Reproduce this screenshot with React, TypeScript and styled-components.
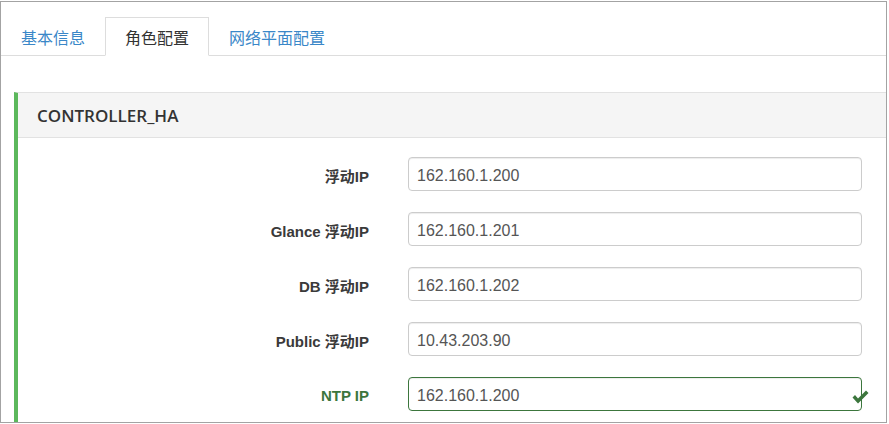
import React from "react";
import styled, { createGlobalStyle } from "styled-components";

const Global = createGlobalStyle`
  html, body { margin: 0; padding: 0; background: #ffffff; }
  body { font-family: "Liberation Sans", Arial, "Noto Sans CJK SC", sans-serif; }
  * { box-sizing: border-box; }
`;

const Frame = styled.div`
  width: 887px;
  height: 422px;
  margin-top: 1px;
  border: 1px solid #a3a3a3;
  overflow: hidden;
  background: #fff;
`;

const TabBar = styled.ul`
  list-style: none;
  margin: 0;
  padding: 15px 0 0 0;
  display: flex;
  border-bottom: 1px solid #dddddd;
`;

const Tab = styled.li<{ $active?: boolean }>`
  padding: 9px 19px 8px;
  line-height: 20px;
  font-size: 16px;
  font-family: "Noto Sans CJK SC", "Liberation Sans", sans-serif;
  margin-bottom: -1px;
  border: 1px solid ${(p) => (p.$active ? "#dddddd" : "transparent")};
  border-bottom-color: ${(p) => (p.$active ? "#ffffff" : "transparent")};
  background: ${(p) => (p.$active ? "#ffffff" : "transparent")};
  color: ${(p) => (p.$active ? "#333333" : "#3a87c8")};
`;

const Content = styled.div`
  padding: 36px 0 0 13px;
`;

const Panel = styled.section`
  border-left: 4px solid #5cb85c;
  border-top: 1px solid #e2e2e2;
  margin-right: -20px;
`;

const PanelHeader = styled.div`
  height: 45px;
  background: #f5f5f5;
  border-bottom: 1px solid #e2e2e2;
  display: flex;
  align-items: center;
  padding-left: 19px;
  font-family: "Open Sans", "Liberation Sans", sans-serif;
  font-weight: 600;
  font-size: 17px;
  color: #333;
`;

const FormGrid = styled.div`
  display: grid;
  grid-template-columns: 351px 454px;
  column-gap: 39px;
  row-gap: 21px;
  padding: 19px 0 30px;
`;

const Label = styled.label<{ $success?: boolean }>`
  display: flex;
  align-items: center;
  justify-content: flex-end;
  padding-top: 3px;
  font-size: 15px;
  font-weight: bold;
  font-family: "Liberation Sans", Arial, "Noto Sans CJK SC", sans-serif;
  color: ${(p) => (p.$success ? "#3c763d" : "#3a3a3a")};
`;

const Field = styled.div`
  position: relative;
`;

const Input = styled.input<{ $success?: boolean }>`
  display: block;
  width: 100%;
  height: 34px;
  padding: 3px 8px 0;
  font-size: 16px;
  font-family: "Liberation Sans", Arial, sans-serif;
  color: #555;
  border: 1px solid ${(p) => (p.$success ? "#3c763d" : "#cccccc")};
  border-radius: 4px;
  background: #fff;
  box-shadow: inset 0 1px 1px rgba(0, 0, 0, 0.075);
  outline: none;
`;

const Feedback = styled.span`
  position: absolute;
  right: -7px;
  top: 13px;
  width: 17px;
  height: 14px;
  display: flex;
`;

const rows = [
  { label: "浮动IP", value: "162.160.1.200" },
  { label: "Glance 浮动IP", value: "162.160.1.201" },
  { label: "DB 浮动IP", value: "162.160.1.202" },
  { label: "Public 浮动IP", value: "10.43.203.90" },
  { label: "NTP IP", value: "162.160.1.200", success: true },
];

export default function App() {
  return (
    <>
      <Global />
      <Frame>
        <TabBar>
          <Tab>基本信息</Tab>
          <Tab $active>角色配置</Tab>
          <Tab>网络平面配置</Tab>
        </TabBar>
        <Content>
          <Panel>
            <PanelHeader>CONTROLLER_HA</PanelHeader>
            <FormGrid>
              {rows.map((r) => (
                <React.Fragment key={r.label}>
                  <Label $success={r.success}>{r.label}</Label>
                  <Field>
                    <Input $success={r.success} defaultValue={r.value} readOnly />
                    {r.success && (
                      <Feedback>
                        <svg width="17" height="14" viewBox="0 0 17 14">
                          <path d="M0.5 7.5 L3 5 L6 8.5 L14 0.5 L16.5 3 L6 13.5 Z" fill="#3c763d" />
                        </svg>
                      </Feedback>
                    )}
                  </Field>
                </React.Fragment>
              ))}
            </FormGrid>
          </Panel>
        </Content>
      </Frame>
    </>
  );
}
